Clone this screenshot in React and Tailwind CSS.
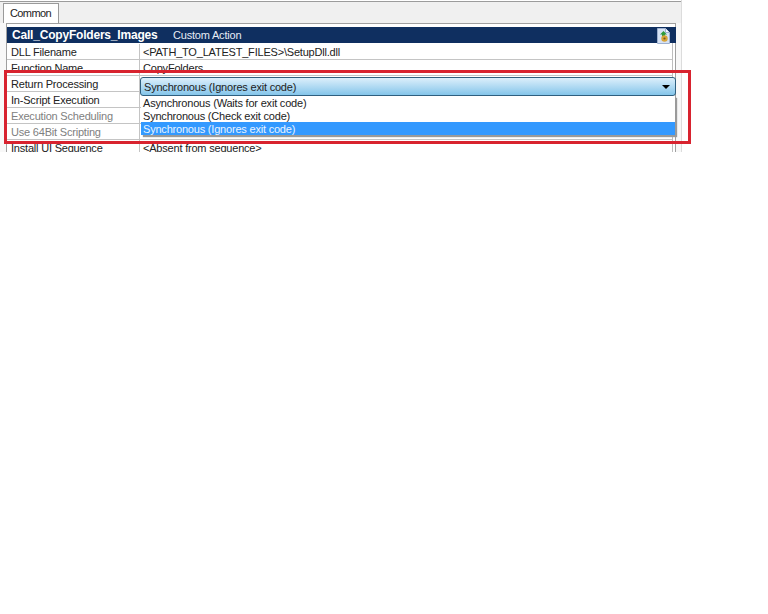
import React from 'react';

const rows = [
  { label: 'DLL Filename', value: '<PATH_TO_LATEST_FILES>\\SetupDll.dll' },
  { label: 'Function Name', value: 'CopyFolders' },
  { label: 'Return Processing', value: '' },
  { label: 'In-Script Execution', value: '' },
  { label: 'Execution Scheduling', value: '', muted: true },
  { label: 'Use 64Bit Scripting', value: '', muted: true },
  { label: 'Install UI Sequence', value: '<Absent from sequence>' },
];

const options = [
  { label: 'Asynchronous (Waits for exit code)' },
  { label: 'Synchronous (Check exit code)' },
  { label: 'Synchronous (Ignores exit code)', active: true },
];

const PageIcon = () => (
  <svg width="13" height="16" viewBox="0 0 13 16">
    <path d="M.5 .5h8L12.5 4.5v11H.5z" fill="#d6e2f4" stroke="#9db0cf" />
    <path d="M8.5 .5v4h4" fill="#f4f8fd" stroke="#9db0cf" />
    <path d="M3 6.5L6.5 3l3.5 3.5H8V9H5V6.5z" fill="#2f9a3c" />
    <circle cx="7.5" cy="10.5" r="3.2" fill="#d9a436" />
    <circle cx="7.5" cy="10.5" r="1.1" fill="#6f5a24" />
  </svg>
);

export default function App() {
  return (
    <div className="relative w-[768px] h-[614px] bg-white overflow-hidden text-[11px] leading-4 tracking-[-0.2px] text-[#222222] font-['Liberation_Sans',sans-serif]">
      <div className="w-[682px] h-[152px] pt-px overflow-hidden border-r border-[#dcdcdc]">
        <div className="h-full bg-[#f0f0f0] border-t border-[#9c9c9c]">
          {/* tab strip */}
          <div className="h-[21px] pl-[3px] pt-px">
            <div className="w-[56px] h-[21px] bg-white border border-b-0 border-[#9a9a9a] pl-[6px] pt-[1px] tracking-[-0.6px]">
              Common
            </div>
          </div>
          {/* custom action grid */}
          <div className="h-full pl-[6px] pr-[5px] bg-[#f8f8f8]">
            <div className="h-full pl-0 pt-[3px] bg-white border border-[#a0a0a0]">
              <div className="h-[16px] w-[669px] flex items-center bg-[#0f2f60] text-white pl-[5px]">
                <span className="font-bold text-[12px] w-[161px]">Call_CopyFolders_Images</span>
                <span className="text-[#e6ecf5]">Custom Action</span>
                <span className="ml-auto mr-[6px] mt-[1px]"><PageIcon /></span>
              </div>
              <div className="w-[666px] pt-px border-r border-[#bdbdbd]">
                {rows.map((row) => (
                  <div key={row.label} className="h-[16px] flex border-b border-[#c4c4c4]">
                    <div className={`w-[133px] pl-[4px] border-r border-[#c4c4c4] ${row.muted ? 'text-[#808080]' : ''}`}>
                      {row.label}
                    </div>
                    <div className="pl-[3px]">{row.value}</div>
                  </div>
                ))}
              </div>
            </div>
          </div>
        </div>
      </div>

      {/* open combo box */}
      <div className="absolute left-[140px] top-[77px] w-[536px] h-[19px] flex items-center justify-between pl-[3px] pr-[5px] rounded-[3px] border border-[#2f5f7f] bg-gradient-to-b from-[#dceffb] to-[#84c5ea]">
        <span>Synchronous (Ignores exit code)</span>
        <span className="w-0 h-0 border-x-[4px] border-x-transparent border-t-[4px] border-t-black" />
      </div>
      <div className="absolute left-[141px] top-[96px] w-[534px] h-[39px] bg-white shadow-[2px_2px_1px_#9a9a9a]">
        {options.map((opt) => (
          <div key={opt.label} className={`h-[13px] pl-[2px] pt-px leading-[13px] ${opt.active ? 'bg-[#3399ff] text-[#e8f3ff]' : ''}`}>
            {opt.label}
          </div>
        ))}
      </div>

      {/* red annotation */}
      <div className="absolute left-[4px] top-[70px] w-[687px] h-[74px] border-[3px] border-[#d8232f]" />
    </div>
  );
}
